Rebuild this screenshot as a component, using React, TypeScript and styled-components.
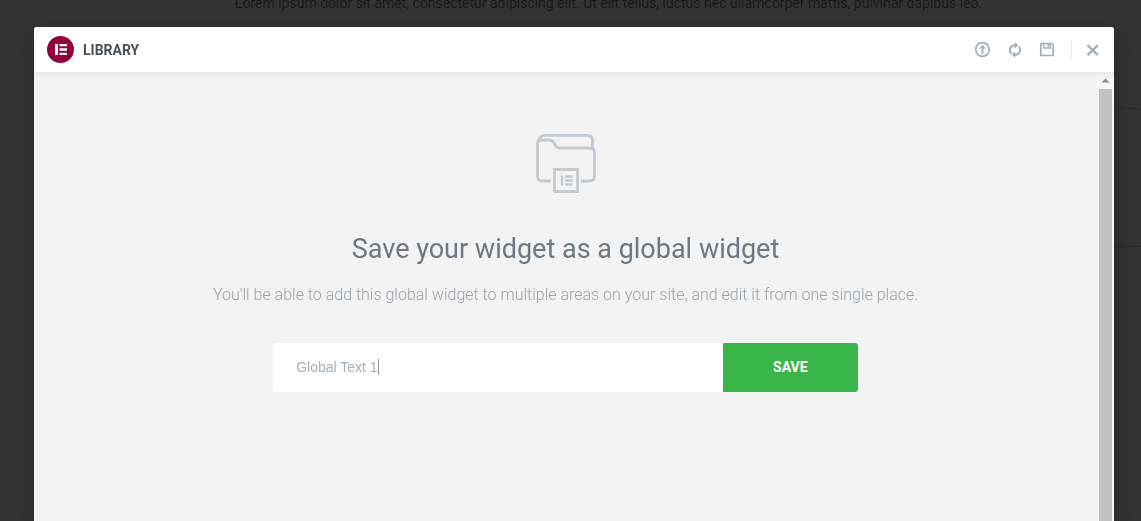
import React, { useState } from "react";
import styled, { createGlobalStyle } from "styled-components";

const GlobalStyle = createGlobalStyle`
  *, *::before, *::after { box-sizing: border-box; }
  body {
    margin: 0;
    overflow: hidden;
    background: #333333;
    font-family: Roboto, "Liberation Sans", sans-serif;
  }
  h1, h2, p { margin: 0; }
`;

const Page = styled.main`
  height: 100vh;
  overflow: hidden;
`;

const PageText = styled.p`
  height: 115px;
  margin-top: -7px;
  padding: 0 44px 0 120px;
  color: #1a1a1a;
  font-size: 14px;
  font-weight: 400;
  line-height: 20px;
  text-align: center;
`;

const PageSection = styled.div`
  height: 138px;
  margin-left: 120px;
  border-top: 1px solid #2d2d2d;
`;

const Overlay = styled.div`
  position: fixed;
  inset: 0;
  display: flex;
  padding: 27px 27px 0 34px;
`;

const Modal = styled.section`
  flex: 1;
  display: flex;
  flex-direction: column;
  min-width: 0;
  overflow: hidden;
  border-radius: 3px 3px 0 0;
  background: #f1f3f5;
  box-shadow: 2px 8px 23px 3px rgba(0, 0, 0, 0.2);
`;

const Header = styled.header`
  z-index: 1;
  display: flex;
  align-items: center;
  justify-content: space-between;
  height: 45px;
  padding: 0 13px;
  background: #ffffff;
  box-shadow: 0 0 8px rgba(0, 0, 0, 0.1);
`;

const Brand = styled.div`
  display: flex;
  align-items: center;
  gap: 9px;
`;

const BrandName = styled.h1`
  color: #495157;
  font-size: 14px;
  font-weight: 700;
  line-height: 20px;
`;

const Actions = styled.div`
  display: flex;
  align-items: center;
`;

const IconButton = styled.button`
  display: flex;
  align-items: center;
  justify-content: center;
  width: 16px;
  height: 16px;
  margin: 0 16px 0 0;
  padding: 0;
  border: 0;
  background: none;
  color: #a4afb7;
  cursor: pointer;
`;

const CloseButton = styled(IconButton)`
  margin: 0 0 0 13px;
`;

const Divider = styled.span`
  width: 1px;
  height: 17px;
  background: #e6e9ec;
`;

const Body = styled.div`
  flex: 1;
  display: flex;
  min-height: 0;
`;

const Content = styled.div`
  flex: 1;
  display: flex;
  flex-direction: column;
  align-items: center;
  min-width: 0;
  padding-top: 61px;
  text-align: center;
`;

const Title = styled.h2`
  margin-top: 38px;
  color: #6d7882;
  font-size: 27px;
  font-weight: 400;
  line-height: 36px;
`;

const Description = styled.p`
  margin-top: 16px;
  color: #98a4ad;
  font-size: 16px;
  font-weight: 300;
  line-height: 24px;
`;

const SaveForm = styled.form`
  display: flex;
  width: 55%;
  height: 49px;
  margin-top: 36px;
  overflow: hidden;
  border-radius: 3px;
`;

const Field = styled.label`
  flex: 1;
  display: flex;
  align-items: center;
  min-width: 0;
  padding: 0 23px 2px;
  background: #ffffff;
  cursor: text;
`;

const NameInput = styled.input`
  field-sizing: content;
  min-width: 0;
  max-width: 100%;
  padding: 0;
  border: 0;
  outline: 0;
  background: none;
  color: #a4afb7;
  caret-color: transparent;
  font-family: "Liberation Sans", Arial, sans-serif;
  font-size: 14px;
  line-height: 20px;
`;

const Caret = styled.span`
  width: 1px;
  height: 16px;
  background: #8f999f;
`;

const SaveButton = styled.button`
  width: 135px;
  padding: 0 0 2px;
  border: 0;
  background: #39b54a;
  color: #ffffff;
  font-family: inherit;
  font-size: 14px;
  font-weight: 700;
  line-height: 20px;
  cursor: pointer;
`;

const ScrollTrack = styled.div`
  display: flex;
  flex-direction: column;
  width: 17px;
  padding: 0 2px;
  background: #f3f4f5;
`;

const ScrollArrow = styled.div`
  display: flex;
  align-items: center;
  justify-content: center;
  height: 17px;
`;

const ScrollThumb = styled.div`
  flex: 1;
  background: #c1c1c1;
`;

const Logo = () => (
  <svg width="27" height="27" viewBox="0 0 27 27" aria-hidden="true">
    <circle cx="13.5" cy="13.5" r="13.5" fill="#93003c" />
    <path fill="#fff" d="M8 8h3v11H8zM12.500 8H20v2.300h-7.500zM12.500 12.350H20v2.300h-7.500zM12.500 16.700H20V19h-7.500z" />
  </svg>
);

const ImportIcon = () => (
  <svg width="16" height="16" viewBox="0 0 16 16" fill="none" stroke="currentColor" strokeWidth="1.700">
    <circle cx="7.500" cy="7.500" r="6.800" />
    <path d="M7.500 12V5" strokeWidth="1.800" />
    <path d="M3.900 6.400 7.500 3.100l3.600 3.300z" fill="currentColor" stroke="none" />
  </svg>
);

const SyncIcon = () => (
  <svg width="16" height="16" viewBox="0 0 16 16" fill="none" stroke="currentColor" strokeWidth="2">
    <path d="M4.300 11.600A4.900 4.900 0 0 1 8 3.300h.7M11.700 4.400A4.900 4.900 0 0 1 8 12.700h-.7" />
    <path d="M7.800 0 11.200 3.300 7.800 6.600zM8.200 9.400 4.800 12.700l3.400 3.300z" fill="currentColor" stroke="none" />
  </svg>
);

const SaveIcon = () => (
  <svg width="16" height="16" viewBox="0 0 16 16" fill="none" stroke="currentColor">
    <path strokeWidth="1.700" strokeLinejoin="round" d="M1.800 1.500h11L14.200 3V13.500H1.800z" />
    <path strokeWidth="1.400" d="M4.600 2v4h6.700V2" />
    <path strokeWidth="1.800" d="M9.300 2v2.800" />
  </svg>
);

const CloseIcon = () => (
  <svg width="16" height="16" viewBox="0 0 16 16" stroke="currentColor" strokeWidth="2.400">
    <path d="M2.500 3.200l10.400 10M12.900 3.200l-10.400 10" />
  </svg>
);

const FolderIcon = () => (
  <svg width="62" height="60" viewBox="0 0 62 60" fill="none" stroke="#c2cbd2" strokeWidth="2.800" strokeLinecap="round" strokeLinejoin="round" aria-hidden="true">
    <path d="M15 48H7.500Q2.500 48 2.500 43V11Q2.500 7 6.500 7H14Q17 7 18.500 9.500L20.500 12.500Q22 15 25 15H54.500Q59.500 15 59.500 20V43Q59.500 48 54.500 48H47" />
    <path d="M4 7.500Q5 2.300 10 2.300H52.500Q57.500 2.300 57.500 7.300V15" />
    <path d="M19.500 36.500H42.500V58.500H19.500z" />
    <path strokeWidth="2.400" strokeLinecap="butt" d="M27 42.500v10M30 43.500H37.500M30 47.500H37.500M30 51.500H37.500" />
  </svg>
);

export default function App() {
  const [name, setName] = useState("Global Text 1");
  return (
    <>
      <GlobalStyle />
      <Page>
        <PageText>
          Lorem ipsum dolor sit amet, consectetur adipiscing elit. Ut elit tellus, luctus nec ullamcorper mattis, pulvinar dapibus leo.
        </PageText>
        <PageSection />
        <PageSection />
      </Page>
      <Overlay>
        <Modal role="dialog" aria-modal="true" aria-labelledby="library-title">
          <Header>
            <Brand>
              <Logo />
              <BrandName id="library-title">LIBRARY</BrandName>
            </Brand>
            <Actions>
              <IconButton type="button" aria-label="Import template"><ImportIcon /></IconButton>
              <IconButton type="button" aria-label="Sync library"><SyncIcon /></IconButton>
              <IconButton type="button" aria-label="Save"><SaveIcon /></IconButton>
              <Divider />
              <CloseButton type="button" aria-label="Close"><CloseIcon /></CloseButton>
            </Actions>
          </Header>
          <Body>
            <Content>
              <FolderIcon />
              <Title>Save your widget as a global widget</Title>
              <Description>
                You'll be able to add this global widget to multiple areas on your site, and edit it from one single place.
              </Description>
              <SaveForm onSubmit={(e: React.FormEvent) => e.preventDefault()}>
                <Field>
                  <NameInput
                    type="text"
                    aria-label="Widget name"
                    value={name}
                    onChange={(e: React.ChangeEvent<HTMLInputElement>) => setName(e.target.value)}
                  />
                  <Caret />
                </Field>
                <SaveButton type="submit">SAVE</SaveButton>
              </SaveForm>
            </Content>
            <ScrollTrack>
              <ScrollArrow>
                <svg width="9" height="5" viewBox="0 0 9 5" aria-hidden="true">
                  <path d="M0.500 4.500 4.500.500l4 4z" fill="#8c8c8c" />
                </svg>
              </ScrollArrow>
              <ScrollThumb />
            </ScrollTrack>
          </Body>
        </Modal>
      </Overlay>
    </>
  );
}
